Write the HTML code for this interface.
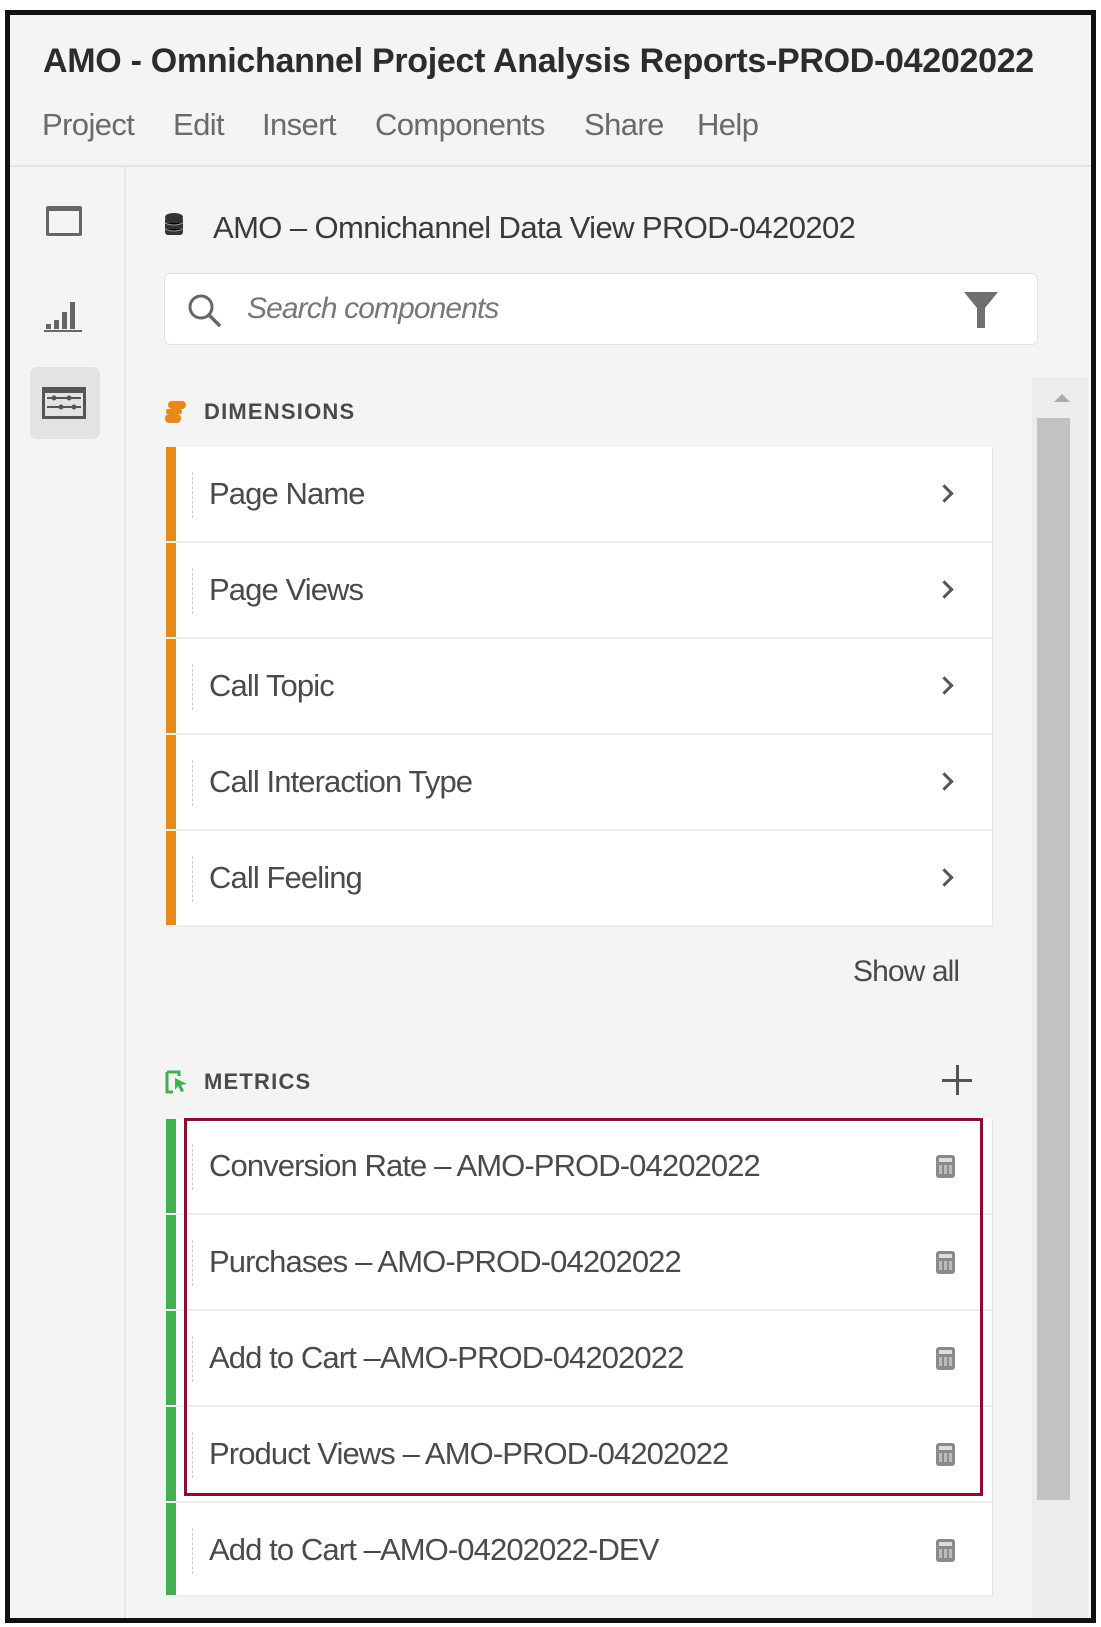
<!DOCTYPE html>
<html><head><meta charset="utf-8"><style>
*{margin:0;padding:0;box-sizing:border-box}
body{width:1101px;height:1627px;background:#fff;position:relative;overflow:hidden;font-family:"Liberation Sans",sans-serif;color:#4b4b4b}
.a{position:absolute}
#frame{left:5px;top:10px;width:1091px;height:1613px;border:5px solid #111;background:#f4f4f4}
.title{left:43px;top:42px;font-size:34px;font-weight:bold;color:#2c2c2c;white-space:nowrap;letter-spacing:-0.3px}
.menu{top:107px;font-size:31px;color:#6a6a6a;letter-spacing:-0.6px}
.row{position:absolute;left:166px;width:827px;height:96px;background:#fff;border-bottom:2px solid #ececec;border-right:1px solid #e6e6e6}
.row .bar{position:absolute;left:0;top:0;width:10px;height:100%}
.row .dot{position:absolute;left:26px;top:25px;height:46px;border-left:1px dashed #ccc}
.row .t{position:absolute;left:43px;top:0;line-height:94px;font-size:31px;color:#4a4a4a;letter-spacing:-0.9px;white-space:nowrap}
.chev{position:absolute;left:772px;top:40px;width:13px;height:13px;border-right:3px solid #555;border-top:3px solid #555;transform:rotate(45deg)}
.calc{position:absolute;left:770px;top:36px;width:19px;height:23px;background:#8a8a8a;border-radius:3px}
.calc:before{content:"";position:absolute;left:3px;top:3px;width:13px;height:4px;background:#ddd}
.calc:after{content:"";position:absolute;left:3px;top:10px;width:13px;height:9px;background:repeating-linear-gradient(90deg,#bbb 0 3px,transparent 3px 5px)}
</style></head><body>
<div id="frame" class="a"></div>
<div class="a title">AMO - Omnichannel Project Analysis Reports-PROD-04202022</div>
<div class="a menu" style="left:42px">Project</div>
<div class="a menu" style="left:173px">Edit</div>
<div class="a menu" style="left:262px">Insert</div>
<div class="a menu" style="left:375px">Components</div>
<div class="a menu" style="left:584px">Share</div>
<div class="a menu" style="left:697px">Help</div>
<div class="a" style="left:10px;top:165px;width:1081px;height:2px;background:#e4e4e4"></div>
<div class="a" style="left:124px;top:167px;width:2px;height:1451px;background:#e6e6e6"></div>
<div class="a" style="left:46px;top:206px;width:36px;height:30px;border:3px solid #666;border-top-width:5px;border-radius:2px"></div>
<svg class="a" style="left:44px;top:292px" width="42" height="42" viewBox="0 0 42 42"><g fill="#666"><rect x="2" y="32" width="5" height="5"/><rect x="10" y="28" width="5" height="9"/><rect x="18" y="20" width="5" height="17"/><rect x="26" y="10" width="5" height="27"/><rect x="0" y="38" width="38" height="2"/></g></svg>
<div class="a" style="left:30px;top:367px;width:70px;height:72px;background:#e3e3e3;border-radius:7px"></div>
<svg class="a" style="left:42px;top:387px" width="44" height="32" viewBox="0 0 44 32"><rect x="1.5" y="1.5" width="41" height="29" fill="none" stroke="#555" stroke-width="3"/><rect x="1" y="1" width="42" height="5" fill="#555"/><g fill="#555"><rect x="5" y="10" width="34" height="2"/><rect x="5" y="19" width="34" height="2"/><circle cx="12" cy="11" r="2.5"/><circle cx="27" cy="11" r="2.5"/><circle cx="19" cy="20" r="2.5"/><circle cx="32" cy="20" r="2.5"/></g></svg>
<svg class="a" style="left:164px;top:213px" width="20" height="26" viewBox="0 0 20 26"><g fill="#333"><ellipse cx="10" cy="4" rx="9" ry="4"/><rect x="1" y="4" width="18" height="18" rx="3"/></g><g stroke="#999" stroke-width="1"><path d="M1 10 Q10 14 19 10M1 16 Q10 20 19 16"/></g></svg>
<div class="a" style="left:213px;top:210px;font-size:31px;color:#3a3a3a;letter-spacing:-0.6px;white-space:nowrap">AMO – Omnichannel Data View PROD-0420202</div>
<div class="a" style="left:164px;top:273px;width:874px;height:72px;background:#fff;border:1px solid #e2e2e2;border-radius:6px"></div>
<svg class="a" style="left:187px;top:293px" width="40" height="36" viewBox="0 0 40 36"><circle cx="14" cy="14" r="11" fill="none" stroke="#666" stroke-width="3"/><path d="M22 22 L32 32" stroke="#666" stroke-width="3.5" stroke-linecap="round"/></svg>
<div class="a" style="left:247px;top:292px;font-size:30px;font-style:italic;color:#777;letter-spacing:-0.9px">Search components</div>
<svg class="a" style="left:962px;top:290px" width="38" height="40" viewBox="0 0 38 40"><path d="M2 2 H36 L23 18 V38 H15 V18 Z" fill="#6f6f6f"/></svg>
<svg class="a" style="left:164px;top:400px" width="24" height="24" viewBox="0 0 24 24"><g fill="#e8891c"><rect x="4" y="1" width="18" height="8" rx="4"/><rect x="2" y="9" width="16" height="5" rx="2"/><rect x="1" y="14" width="16" height="9" rx="4"/></g></svg>
<div class="a" style="left:204px;top:399px;font-size:22px;font-weight:bold;color:#4a4a4a;letter-spacing:1.2px">DIMENSIONS</div>
<div class="row" style="top:447px"><div class="bar" style="background:#e8891c"></div><div class="dot"></div><div class="t">Page Name</div><div class="chev"></div></div>
<div class="row" style="top:543px"><div class="bar" style="background:#e8891c"></div><div class="dot"></div><div class="t">Page Views</div><div class="chev"></div></div>
<div class="row" style="top:639px"><div class="bar" style="background:#e8891c"></div><div class="dot"></div><div class="t">Call Topic</div><div class="chev"></div></div>
<div class="row" style="top:735px"><div class="bar" style="background:#e8891c"></div><div class="dot"></div><div class="t">Call Interaction Type</div><div class="chev"></div></div>
<div class="row" style="top:831px"><div class="bar" style="background:#e8891c"></div><div class="dot"></div><div class="t">Call Feeling</div><div class="chev"></div></div>
<div class="a" style="left:853px;top:955px;font-size:30px;color:#4a4a4a;letter-spacing:-0.9px">Show all</div>
<svg class="a" style="left:165px;top:1070px" width="24" height="24" viewBox="0 0 24 24"><path d="M2 2 H14 V6 M2 2 V22 H8" fill="none" stroke="#3fb24f" stroke-width="3"/><path d="M10 8 L22 14 L16 15 L19 21 L16 22 L13 16 L10 20 Z" fill="#3fb24f"/></svg>
<div class="a" style="left:204px;top:1069px;font-size:22px;font-weight:bold;color:#4a4a4a;letter-spacing:1.2px">METRICS</div>
<div class="a" style="left:942px;top:1079px;width:30px;height:3px;background:#555"></div>
<div class="a" style="left:956px;top:1065px;width:3px;height:30px;background:#555"></div>
<div class="row" style="top:1119px"><div class="bar" style="background:#3fb24f"></div><div class="dot"></div><div class="t">Conversion Rate – AMO-PROD-04202022</div><div class="calc"></div></div>
<div class="row" style="top:1215px"><div class="bar" style="background:#3fb24f"></div><div class="dot"></div><div class="t">Purchases – AMO-PROD-04202022</div><div class="calc"></div></div>
<div class="row" style="top:1311px"><div class="bar" style="background:#3fb24f"></div><div class="dot"></div><div class="t">Add to Cart –AMO-PROD-04202022</div><div class="calc"></div></div>
<div class="row" style="top:1407px"><div class="bar" style="background:#3fb24f"></div><div class="dot"></div><div class="t">Product Views – AMO-PROD-04202022</div><div class="calc"></div></div>
<div class="row" style="top:1503px;height:94px"><div class="bar" style="background:#3fb24f"></div><div class="dot"></div><div class="t">Add to Cart –AMO-04202022-DEV</div><div class="calc"></div></div>
<div class="a" style="left:184px;top:1118px;width:799px;height:378px;border:3.5px solid #8b0e2a"></div>
<div class="a" style="left:1032px;top:377px;width:56px;height:1241px;background:#ececec"></div>
<div class="a" style="left:1054px;top:394px;width:0;height:0;border-left:8px solid transparent;border-right:8px solid transparent;border-bottom:8px solid #aaa"></div>
<div class="a" style="left:1037px;top:418px;width:33px;height:1082px;background:#c2c2c2"></div>
</body></html>
